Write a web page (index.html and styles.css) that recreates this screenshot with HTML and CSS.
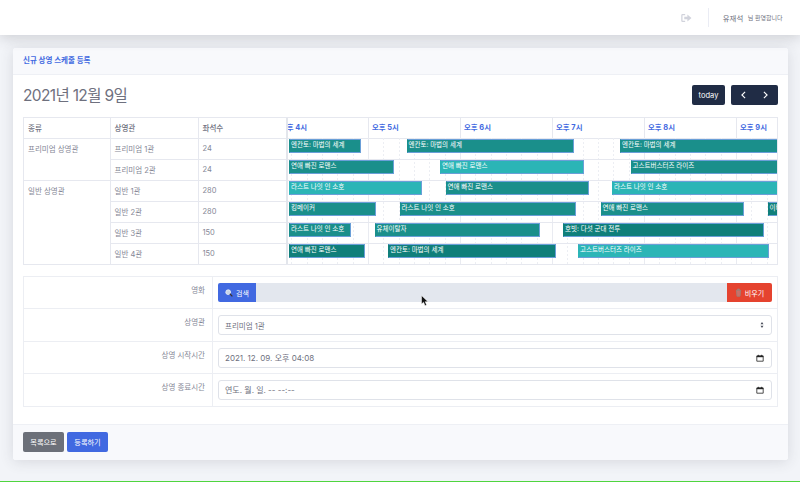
FILE: index.html
```html
<!DOCTYPE html>
<html lang="ko">
<head>
  <meta charset="UTF-8">
  <meta name="viewport" content="width=device-width, initial-scale=1.0">
  <title>신규 상영 스케줄 등록</title>
  <link rel="stylesheet" href="styles.css">
</head>
<body>

  <header class="topbar">
    <svg class="logout" viewBox="0 0 12 9" width="11" height="8">
      <path d="M4.5 .8H1.5Q.8 .8 .8 1.5V7.5Q.8 8.2 1.5 8.2H4.5" fill="none" stroke="#d1d3dc" stroke-width="1.4"/>
      <path d="M3.5 3.2H7V.6L11.6 4.5L7 8.4V5.8H3.5Z" fill="#d1d3dc"/>
    </svg>
    <span class="divider"></span>
    <span class="user-name">유재석</span>
    <span class="user-hello">님 환영합니다</span>
  </header>

  <main class="card">
    <div class="card-header">신규 상영 스케줄 등록</div>

    <div class="card-body">
      <div class="cal-toolbar">
        <h2 class="cal-title">2021년 12월 9일</h2>
        <div class="cal-buttons">
          <button type="button" class="btn-dark today">today</button>
          <div class="btn-dark arrows">
            <svg viewBox="0 0 6 10" width="5" height="8"><path d="M5 1L1 5L5 9" fill="none" stroke="#fff" stroke-width="1.4"/></svg>
            <svg viewBox="0 0 6 10" width="5" height="8"><path d="M1 1L5 5L1 9" fill="none" stroke="#fff" stroke-width="1.4"/></svg>
          </div>
        </div>
      </div>

      <div class="timeline">
        <table class="rooms">
          <colgroup><col class="col-type"><col class="col-room"><col></colgroup>
          <tr><th>종류</th><th>상영관</th><th>좌석수</th></tr>
          <tr><td rowspan="2">프리미엄 상영관</td><td>프리미엄 1관</td><td>24</td></tr>
          <tr><td>프리미엄 2관</td><td>24</td></tr>
          <tr><td rowspan="4">일반 상영관</td><td>일반 1관</td><td>280</td></tr>
          <tr><td>일반 2관</td><td>280</td></tr>
          <tr><td>일반 3관</td><td>150</td></tr>
          <tr><td>일반 4관</td><td>150</td></tr>
        </table>

        <div class="chart" id="chart"></div>
      </div>

      <div class="form-table">
        <div class="form-row">
          <label class="form-label">영화</label>
          <div class="form-field">
            <div class="movie-group">
              <button type="button" class="btn-search">
                <svg viewBox="0 0 10 10" width="8" height="8"><circle cx="4" cy="4" r="3" fill="#c9d6e8" stroke="#eef2f7"/><path d="M6 6L9.2 9.2" stroke="#3a3030" stroke-width="1.6"/></svg>
                검색
              </button>
              <div class="movie-value"></div>
              <button type="button" class="btn-clear">
                <svg viewBox="0 0 8 10" width="7" height="9"><path d="M1 2.5H7M3 2.5V1H5V2.5M1.6 2.5L2.2 9.3H5.8L6.4 2.5" fill="#c9706a" stroke="#9a7f78" stroke-width=".9"/></svg>
                비우기
              </button>
            </div>
          </div>
        </div>
        <div class="form-row">
          <label class="form-label">상영관</label>
          <div class="form-field">
            <div class="input select">
              프리미엄 1관
              <svg viewBox="0 0 6 10" width="4" height="6"><path d="M3 0L5.5 3.8H.5ZM3 10L.5 6.2H5.5Z" fill="#4a4d5a"/></svg>
            </div>
          </div>
        </div>
        <div class="form-row">
          <label class="form-label">상영 시작시간</label>
          <div class="form-field">
            <div class="input date">
              2021. 12. 09. 오후 04:08
              <svg viewBox="0 0 10 10" width="8" height="8"><path d="M1 2.5H9V9H1ZM3 1V2.5M7 1V2.5" fill="#fff" stroke="#222" stroke-width="1"/><rect x="1" y="2" width="8" height="2" fill="#222"/></svg>
            </div>
          </div>
        </div>
        <div class="form-row">
          <label class="form-label">상영 종료시간</label>
          <div class="form-field">
            <div class="input date">
              연도. 월. 일. -- --:--
              <svg viewBox="0 0 10 10" width="8" height="8"><path d="M1 2.5H9V9H1ZM3 1V2.5M7 1V2.5" fill="#fff" stroke="#222" stroke-width="1"/><rect x="1" y="2" width="8" height="2" fill="#222"/></svg>
            </div>
          </div>
        </div>
      </div>
    </div>

    <div class="card-footer">
      <button type="button" class="btn btn-gray">목록으로</button>
      <button type="button" class="btn btn-blue">등록하기</button>
    </div>
  </main>

  <svg class="cursor" viewBox="0 0 8 12" width="8" height="12"><path d="M.5 .5V9L2.6 7.2L4 10.8L5.6 10.1L4.2 6.7H7Z" fill="#111" stroke="#fff" stroke-width=".5"/></svg>
  <div class="edge-line"></div>

  <script src="chart.js"></script>
</body>
</html>
```
FILE: styles.css
```css
* {
  box-sizing: border-box;
}

html, body {
  height: 100%;
}

body {
  font-family: Inter, "Noto Sans CJK KR", sans-serif;
  font-size: 7.5px;
  color: #858796;
  background-color: #f2f4f8;
  margin: 0;
  padding: 0;
  overflow: hidden;
  position: relative;
}

.topbar {
  height: 35px;
  background-color: #fff;
  box-shadow: 0 3px 14px rgba(58, 59, 69, 0.2);
  display: flex;
  align-items: center;
  justify-content: flex-end;
  padding-right: 17.5px;
  margin-bottom: 13px;
  position: relative;
}

.logout {
  margin-right: 16px;
}

.divider {
  width: 1px;
  height: 19px;
  background-color: #eaecf4;
  margin-right: 14px;
}

.user-name {
  font-size: 7.4px;
  color: #6e707e;
  margin-right: 4.5px;
}

.user-hello {
  font-size: 6px;
  color: #6e707e;
}

.card {
  width: 775px;
  height: 412px;
  margin-left: 13px;
  background-color: #fff;
  border-radius: 3px;
  box-shadow: 0 2px 14px rgba(58, 59, 69, 0.14);
  display: flex;
  flex-direction: column;
}

.card-header {
  height: 27px;
  padding: 0 10px;
  line-height: 25px;
  font-size: 7.5px;
  font-weight: 700;
  color: #4169e1;
  background-color: #f8f9fc;
  border-bottom: 1px solid #eef0f5;
  border-radius: 3px 3px 0 0;
}

.card-body {
  flex: 1;
  padding: 0 10px;
}

.cal-toolbar {
  height: 40px;
  margin-bottom: 2px;
  display: flex;
  align-items: center;
  justify-content: space-between;
}

.cal-title {
  margin: -2px 0 0;
  font-size: 15.5px;
  font-weight: 400;
  letter-spacing: -0.65px;
  color: #6e707e;
}

.cal-buttons {
  display: flex;
  gap: 6px;
}

.btn-dark {
  height: 20px;
  background-color: #202c45;
  color: #fff;
  border: none;
  border-radius: 2px;
  font-family: inherit;
  font-size: 7.5px;
  padding: 0;
}

.today {
  width: 33px;
}

.arrows {
  width: 47px;
  display: flex;
  align-items: center;
  justify-content: space-between;
  padding: 0 10px;
}

.timeline {
  display: flex;
  height: 148px;
  border: 1px solid #e6e8ef;
}

.rooms {
  width: 264px;
  border-collapse: collapse;
  table-layout: fixed;
  flex: none;
  border-right: 2px solid #e3e6ec;
}

.col-type {
  width: 86px;
}

.col-room {
  width: 88px;
}

.rooms th,
.rooms td {
  height: 21px;
  padding: 0 4px;
  border: 1px solid #e6e8ef;
  text-align: left;
  vertical-align: middle;
  font-weight: 400;
  white-space: nowrap;
}

.rooms tr:first-child th {
  height: 20px;
  border-top: none;
  color: #6e707e;
  font-weight: 500;
}

.rooms th:first-child,
.rooms td[rowspan] {
  border-left: none;
}

.rooms td[rowspan] {
  vertical-align: top;
  padding-top: 4px;
}

.rooms tr:last-child td {
  border-bottom: none;
}

.chart {
  flex: 1;
  position: relative;
  overflow: hidden;
}

.hour {
  position: absolute;
  top: 0;
  height: 20px;
  line-height: 20px;
  padding-left: 3px;
  font-weight: 700;
  font-size: 7.4px;
  color: #4169e1;
  border-left: 1px solid #e6e8ef;
  white-space: nowrap;
}

.hour-line {
  position: absolute;
  top: 20px;
  bottom: 0;
  width: 1px;
  background-color: #e9ebf1;
}

.slot-line {
  position: absolute;
  top: 20px;
  bottom: 0;
  width: 1px;
  background-image: linear-gradient(#eceef3 50%, transparent 50%);
  background-size: 1px 4px;
}

.row-line {
  position: absolute;
  left: 0;
  right: 0;
  height: 1px;
  background-color: #e6e8ef;
}

.event {
  position: absolute;
  height: 14px;
  line-height: 11px;
  padding-left: 1px;
  color: #fff;
  font-size: 6.5px;
  white-space: nowrap;
  overflow: hidden;
  border: 1px solid #6a9fd8;
  border-left-color: transparent;
}

.event-mid { background-color: #1a8f8b; }
.event-dark { background-color: #0f7f7a; }
.event-light { background-color: #2bb5b6; }

.form-table {
  margin-top: 11px;
  border: 1px solid #eceef3;
}

.form-row {
  display: flex;
  height: 32.25px;
  border-bottom: 1px solid #eceef3;
}

.form-row:last-child {
  border-bottom: none;
}

.form-label {
  width: 189px;
  padding: 7px 7px 0 0;
  text-align: right;
  border-right: 1px solid #eceef3;
}

.form-field {
  flex: 1;
  padding: 6px 5px 0;
}

.movie-group {
  display: flex;
  height: 19px;
}

.btn-search,
.btn-clear {
  border: none;
  color: #fff;
  font-family: inherit;
  font-size: 7px;
  padding: 0;
  display: flex;
  align-items: center;
  justify-content: center;
  gap: 3px;
}

.btn-search {
  width: 38px;
  background-color: #4169e1;
  border-radius: 2px 0 0 2px;
}

.btn-clear {
  width: 45px;
  background-color: #e5432f;
  border-radius: 0 2px 2px 0;
}

.movie-value {
  flex: 1;
  background-color: #e3e7ee;
}

.input {
  height: 20px;
  border: 1px solid #dfe2e9;
  border-radius: 3px;
  background-color: #fff;
  color: #6e707e;
  font-size: 7.5px;
  display: flex;
  align-items: center;
  justify-content: space-between;
  padding: 0 7px 0 6px;
}

.date {
  font-size: 8px;
}

.card-footer {
  height: 36px;
  background-color: #f8f9fc;
  border-top: 1px solid #eef0f5;
  border-radius: 0 0 3px 3px;
  padding: 7px 10px 0;
  display: flex;
  gap: 3px;
}

.btn {
  height: 20px;
  width: 41px;
  color: #fff;
  border: none;
  border-radius: 2px;
  font-family: inherit;
  font-size: 7.2px;
  padding: 0;
}

.btn-gray {
  background-color: #6c7079;
}

.btn-blue {
  background-color: #4169e1;
}

.cursor {
  position: absolute;
  left: 421px;
  top: 295px;
}

.edge-line {
  position: absolute;
  left: 0;
  right: 0;
  bottom: 0;
  height: 1px;
  background-color: #4fd53f;
}
```
FILE: chart.js
```js
// 첫 시간선(오후 4시)의 x 위치, 시간당 폭 (차트 왼쪽 기준)
var HOUR_WIDTH = 92;
var FIRST_HOUR = -12;
var CHART_LEFT = 288;
var HEADER_HEIGHT = 20;
var ROW_HEIGHT = 21;

var HOUR_LABELS = ["오후 4시", "오후 5시", "오후 6시", "오후 7시", "오후 8시", "오후 9시"];

// [영화, 시작 x, 끝 x, 색]
var ROWS = [
  [["엔칸토: 마법의 세계", 289, 360.5, "mid"], ["엔칸토: 마법의 세계", 406.5, 573.5, "mid"], ["엔칸토: 마법의 세계", 620, 778, "mid"]],
  [["연애 빠진 로맨스", 289, 393.5, "mid"], ["연애 빠진 로맨스", 440, 584, "light"], ["고스트버스터즈 라이즈", 630.5, 778, "mid"]],
  [["라스트 나잇 인 소호", 289, 421.5, "light"], ["연애 빠진 로맨스", 445.5, 588.5, "mid"], ["라스트 나잇 인 소호", 612, 778, "light"]],
  [["킹메이커", 289, 375.5, "mid"], ["라스트 나잇 인 소호", 399.5, 576, "mid"], ["연애 빠진 로맨스", 600.5, 743.5, "mid"], ["이터널스", 767.5, 778, "dark"]],
  [["라스트 나잇 인 소호", 289, 350.5, "mid"], ["유체이탈자", 374.5, 539.5, "mid"], ["호빗: 다섯 군대 전투", 563, 763.5, "dark"]],
  [["연애 빠진 로맨스", 289, 364.5, "dark"], ["엔칸토: 마법의 세계", 388, 555.5, "dark"], ["고스트버스터즈 라이즈", 578, 768.5, "light"]]
];

var chart = document.getElementById("chart");

function addDiv(className, left) {
  var el = document.createElement("div");
  el.className = className;
  el.style.left = left + "px";
  chart.appendChild(el);
  return el;
}

addDiv("row-line", 0).style.top = HEADER_HEIGHT + "px";

// 세로 눈금
HOUR_LABELS.forEach(function(label, i) {
  var x = FIRST_HOUR + i * HOUR_WIDTH;
  var hour = addDiv("hour", x);
  hour.textContent = label;
  hour.style.width = HOUR_WIDTH + "px";
  addDiv("hour-line", x);
  for (var s = 1; s < 6; s++) {
    addDiv("slot-line", x + s * HOUR_WIDTH / 6);
  }
});

// 행과 상영 막대
ROWS.forEach(function(events, r) {
  var top = HEADER_HEIGHT + r * ROW_HEIGHT;
  addDiv("row-line", 0).style.top = (top + ROW_HEIGHT) + "px";
  events.forEach(function(ev) {
    var el = addDiv("event event-" + ev[3], ev[1] - CHART_LEFT);
    el.style.top = (top + 1) + "px";
    el.style.width = (ev[2] - ev[1]) + "px";
    el.textContent = ev[0];
  });
});
```
